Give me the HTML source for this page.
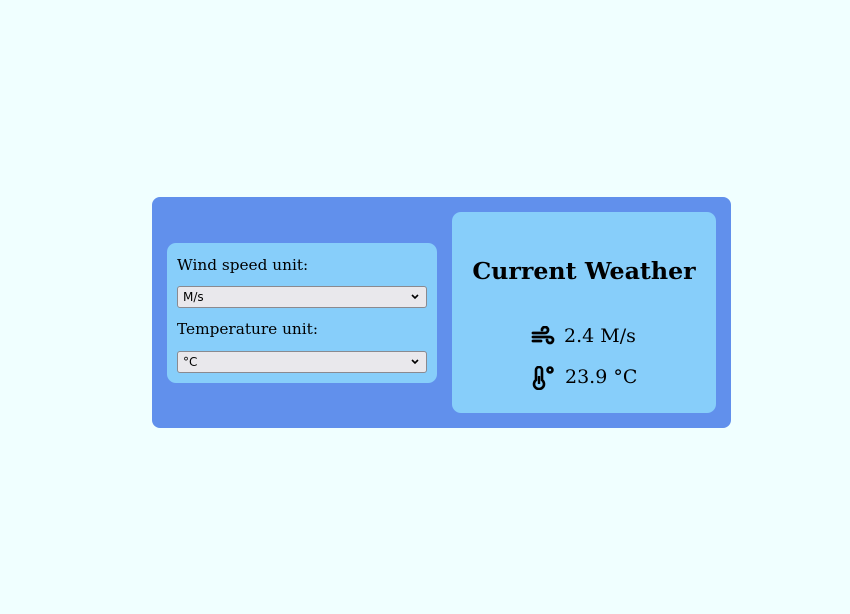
<!DOCTYPE html>
<html><head><style>
html,body{margin:0;padding:0;background:#f0ffff;width:850px;height:614px;overflow:hidden;font-family:"DejaVu Serif","Liberation Serif",serif;}
.outer{position:absolute;left:152px;top:197px;width:579px;height:231px;background:#6190ec;border-radius:8px;}
.left{position:absolute;left:167px;top:243px;width:270px;height:140px;background:#87cefa;border-radius:9px;}
.right{position:absolute;left:452px;top:212px;width:264px;height:201px;background:#87cefa;border-radius:9px;}
.lbl{position:absolute;left:177px;font-size:15.3px;color:#000;}
.sel{position:absolute;left:177px;width:248px;height:20px;background:#e9e8ec;border:1px solid #8a8a90;border-radius:3px;font-family:"DejaVu Sans","Liberation Sans",sans-serif;font-size:12px;line-height:20px;}
.sel span{position:absolute;left:5px;}
.sel svg{position:absolute;right:7px;top:7px;}
.title{position:absolute;left:452px;width:264px;text-align:center;top:257px;font-size:23.7px;font-weight:bold;}
.row{position:absolute;font-size:19px;}
</style></head><body>
<div class="outer"></div>
<div class="left"></div>
<div class="right"></div>
<div class="lbl" style="top:256px">Wind speed unit:</div>
<div class="sel" style="top:286px"><span>M/s</span><svg width="8" height="6" viewBox="0 0 8 6"><path d="M1 1L4 4L7 1" stroke="#000" stroke-width="1.6" fill="none"/></svg></div>
<div class="lbl" style="top:320px">Temperature unit:</div>
<div class="sel" style="top:351px"><span>°C</span><svg width="8" height="6" viewBox="0 0 8 6"><path d="M1 1L4 4L7 1" stroke="#000" stroke-width="1.6" fill="none"/></svg></div>
<div class="title">Current Weather</div>
<svg style="position:absolute;left:531px;top:326px" width="24" height="22" viewBox="0 0 24 22">
<g stroke="#000" stroke-width="2.8" fill="none" stroke-linecap="round">
<path d="M2 7H14a3 3 0 1 0-3-3"/>
<path d="M2 11H19a3 3 0 1 1-3 3"/>
<path d="M2 15H10"/>
</g></svg>
<div class="row" style="left:564px;top:325px">2.4 M/s</div>
<svg style="position:absolute;left:531px;top:366px" width="24" height="24" viewBox="0 0 24 24">
<g stroke="#000" stroke-width="2.6" fill="none">
<path d="M5 14V4a3 3 0 0 1 6 0v10a5 5 0 1 1-6 0z"/>
<circle cx="19" cy="4" r="2.5"/>
</g><path d="M8 10v8" stroke="#000" stroke-width="2.4"/></svg>
<div class="row" style="left:565px;top:366px">23.9 °C</div>
</body></html>
